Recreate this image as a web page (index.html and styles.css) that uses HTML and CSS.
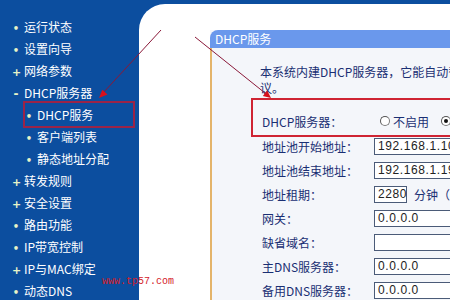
FILE: index.html
```html
<!DOCTYPE html>
<html lang="zh-CN">
<head>
<meta charset="utf-8">
<title>DHCP服务</title>
<link rel="stylesheet" href="styles.css">
</head>
<body>
<div class="page">
  <nav class="sidebar">
    <ul class="menu">
      <li class="item"><span class="mark">•</span>运行状态</li>
      <li class="item"><span class="mark">•</span>设置向导</li>
      <li class="item"><span class="mark plus">+</span>网络参数</li>
      <li class="item"><span class="mark minus">-</span>DHCP服务器</li>
      <li class="item sub"><span class="mark">•</span>DHCP服务</li>
      <li class="item sub"><span class="mark">•</span>客户端列表</li>
      <li class="item sub"><span class="mark">•</span>静态地址分配</li>
      <li class="item"><span class="mark plus">+</span>转发规则</li>
      <li class="item"><span class="mark plus">+</span>安全设置</li>
      <li class="item"><span class="mark">•</span>路由功能</li>
      <li class="item"><span class="mark">•</span>IP带宽控制</li>
      <li class="item"><span class="mark plus">+</span>IP与MAC绑定</li>
      <li class="item"><span class="mark">•</span>动态DNS</li>
    </ul>
  </nav>
  <main class="main">
    <section class="panel">
      <h2 class="panel-title">DHCP服务</h2>
      <div class="panel-body">
        <p class="intro">本系统内建DHCP服务器，它能自动替您配置局域网中各计算机的TCP/IP协<br>议。</p>
        <div class="form">
          <div class="row row-radio">
            <span class="label">DHCP服务器：</span>
            <span class="radio"></span><span class="radio-text">不启用</span>
            <span class="radio checked"></span><span class="radio-text">启用</span>
          </div>
          <div class="row"><span class="label">地址池开始地址：</span><span class="input wide">192.168.1.100</span></div>
          <div class="row"><span class="label">地址池结束地址：</span><span class="input wide">192.168.1.199</span></div>
          <div class="row"><span class="label">地址租期：</span><span class="input short">2280</span><span class="unit">分钟（1～2880分钟，缺省为120分钟）</span></div>
          <div class="row"><span class="label">网关：</span><span class="input wide">0.0.0.0</span></div>
          <div class="row"><span class="label">缺省域名：</span><span class="input wide"></span></div>
          <div class="row"><span class="label">主DNS服务器：</span><span class="input wide">0.0.0.0</span></div>
          <div class="row"><span class="label">备用DNS服务器：</span><span class="input wide">0.0.0.0</span></div>
        </div>
      </div>
    </section>
  </main>
</div>
<div class="annot-box side-box"></div>
<div class="annot-box form-box"></div>
<svg class="arrows" width="450" height="300" viewBox="0 0 450 300">
  <line x1="161" y1="30" x2="103" y2="93" stroke="#8a1838" stroke-width="1"/>
  <polygon points="99,98 107.5,94.5 102.3,89.8" fill="#d8101c"/>
  <line x1="195" y1="37" x2="265" y2="93" stroke="#8a1838" stroke-width="1"/>
  <polygon points="271,98 262.8,95.9 267.2,90.5" fill="#d8101c"/>
</svg>
<span class="watermark">www.tp57.com</span>
</body>
</html>
```
FILE: styles.css
```css
html, body {
  margin: 0;
  padding: 0;
}
body {
  width: 450px;
  height: 300px;
  overflow: hidden;
  position: relative;
  background: #0c4e9f;
  font-family: "Noto Sans CJK SC", "Noto Sans", sans-serif;
  font-size: 12px;
}
.page {
  display: flex;
  width: 450px;
  height: 300px;
}
.sidebar {
  width: 139px;
  flex: none;
}
.menu {
  list-style: none;
  margin: 0;
  padding: 16px 0 0 0;
}
.item {
  height: 22px;
  line-height: 22px;
  padding-left: 12px;
  color: #ffffff;
  white-space: nowrap;
}
.item.sub {
  padding-left: 25px;
}
.mark {
  display: inline-block;
  width: 8px;
  margin-right: 4px;
  text-align: center;
  color: #e8f4c8;
  font-family: "DejaVu Sans", sans-serif;
  font-size: 10px;
  font-weight: bold;
}
.mark.plus {
  font-size: 11px;
}
.mark.minus {
  font-size: 12px;
}
.main {
  flex: 1;
  margin-top: 4px;
  background: #ffffff;
  border-top-left-radius: 26px;
  padding: 26px 0 0 71px;
  overflow: hidden;
  min-width: 0;
}
.panel {
  width: 300px;
  height: 280px;
  background: #f4f6fa;
}
.panel-title {
  margin: 0;
  height: 18px;
  line-height: 18px;
  padding-left: 5px;
  background: #6a98ec;
  color: #ffffff;
  font-size: 12px;
  font-weight: normal;
  border-top-left-radius: 8px;
}
.panel-body {
  border-left: 2px solid #e4b46a;
  padding-left: 48px;
  height: 262px;
}
.intro {
  margin: 0;
  padding-top: 16px;
  line-height: 16px;
  color: #1a2f73;
  white-space: nowrap;
}
.form {
  margin-top: 12px;
  padding-left: 2px;
}
.row {
  display: flex;
  align-items: center;
  height: 24px;
  color: #1a2f73;
  white-space: nowrap;
}
.row-radio {
  height: 26px;
}
.label {
  width: 112px;
  flex: none;
}
.radio {
  width: 10px;
  height: 10px;
  box-sizing: border-box;
  border-radius: 50%;
  border: 1px solid #7a7a7a;
  border-top-color: #555;
  border-left-color: #555;
  background: #ffffff;
  margin-left: 6px;
  flex: none;
  position: relative;
}
.radio.checked {
  margin-left: 12px;
}
.radio.checked::after {
  content: "";
  position: absolute;
  left: 2px;
  top: 2px;
  width: 4px;
  height: 4px;
  border-radius: 50%;
  background: #111;
}
.radio-text {
  margin-left: 3px;
}
.input {
  height: 17px;
  box-sizing: border-box;
  border: 1px solid #4b5b78;
  background: #ffffff;
  padding: 0 3px;
  font-family: "Liberation Sans", Arial, sans-serif;
  font-size: 12px;
  letter-spacing: 0.6px;
  line-height: 15px;
  color: #222;
  flex: none;
}
.input.wide {
  width: 110px;
}
.input.short {
  width: 33px;
}
.unit {
  margin-left: 7px;
}
.annot-box {
  position: absolute;
  box-sizing: border-box;
  pointer-events: none;
}
.side-box {
  left: 23px;
  top: 101px;
  width: 112px;
  height: 27px;
  border: 2px solid #9a2448;
}
.form-box {
  left: 251px;
  top: 98px;
  width: 220px;
  height: 39px;
  border: 2px solid #cf2433;
}
.arrows {
  position: absolute;
  left: 0;
  top: 0;
  pointer-events: none;
}
.watermark {
  position: absolute;
  left: 102px;
  top: 275px;
  font-family: "Liberation Mono", monospace;
  font-size: 10px;
  color: #d4202a;
  line-height: 14px;
}
```
